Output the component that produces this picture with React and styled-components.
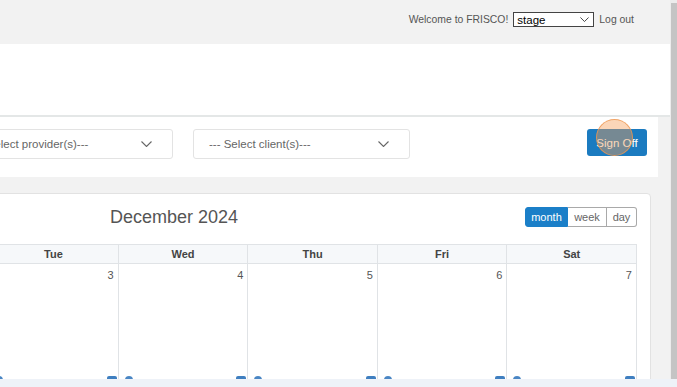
import React from "react";
import styled, { createGlobalStyle } from "styled-components";

const Global = createGlobalStyle`
  html, body { margin: 0; padding: 0; }
  body { font-family: "Liberation Sans", Arial, sans-serif; background: #fff; }
  * { box-sizing: border-box; }
`;

const Root = styled.div`
  width: 677px;
  height: 387px;
  overflow: hidden;
  display: flex;
  flex-direction: column;
`;

const Body = styled.div`
  flex: 1;
  min-height: 0;
  display: flex;
`;

const Main = styled.div`
  width: 670px;
  flex: none;
  overflow: hidden;
  background: #f2f2f2;
  display: flex;
  flex-direction: column;
`;

const Scrollbar = styled.div`
  flex: 1;
  background: #ececec;
  display: flex;
  justify-content: flex-end;
  padding-top: 3px;
`;

const Thumb = styled.div`
  width: 6px;
  height: 100%;
  background: #c4c4c4;
`;

const BottomBand = styled.div`
  height: 8px;
  flex: none;
  background: #eef2f8;
`;

const TopBar = styled.div`
  height: 44px;
  flex: none;
  display: flex;
  justify-content: flex-end;
  align-items: flex-start;
  gap: 4px;
  padding: 12px 36px 0 0;
  font-size: 10.4px;
  color: #555;
`;

const TopText = styled.span`
  line-height: 15px;
`;

const EnvSelect = styled.div`
  width: 81px;
  height: 15px;
  margin: 0 1px;
  border: 1px solid #444;
  background: #fff;
  display: flex;
  align-items: center;
  justify-content: space-between;
  padding: 0 4px 0 3px;
  font-size: 11.5px;
  color: #000;
`;

const Banner = styled.div`
  height: 73px;
  flex: none;
  background: #fff;
  border-bottom: 2px solid #e4e7e7;
`;

const Content = styled.div`
  margin-left: -300px;
  padding-right: 12px;
  display: flex;
  flex-direction: column;
`;

const FilterBar = styled.div`
  height: 60px;
  background: #fff;
  display: flex;
  align-items: flex-start;
  gap: 20px;
  padding: 12px 11px 0 256px;
`;

const Picker = styled.div`
  width: 217px;
  height: 30px;
  border: 1px solid #e3e3e3;
  border-radius: 3px;
  display: flex;
  align-items: center;
  justify-content: space-between;
  padding: 0 20px 0 15px;
  font-size: 11.5px;
  color: #666;
`;

const SignOffWrap = styled.div`
  margin-left: auto;
  position: relative;
`;

const SignOff = styled.button`
  width: 60px;
  height: 27px;
  border: none;
  border-radius: 3px;
  background: #1b7bc0;
  color: #fff;
  font-family: inherit;
  font-size: 11.5px;
  padding: 0;
`;

const ClickRing = styled.div`
  position: absolute;
  left: 9px;
  top: -10px;
  width: 37px;
  height: 37px;
  border-radius: 50%;
  background: rgba(246, 158, 86, 0.42);
  border: 1px solid rgba(238, 150, 80, 0.8);
  pointer-events: none;
`;

const Card = styled.div`
  margin: 16px 7px 0 15px;
  background: #fff;
  border: 1px solid #e2e2e2;
  border-radius: 4px;
  padding: 13px 13px 0 13px;
`;

const Toolbar = styled.div`
  height: 20px;
  display: flex;
  align-items: center;
  margin-bottom: 17px;
`;

const ToolLeft = styled.div`
  width: 94px;
  display: flex;
  gap: 4px;
`;

const Title = styled.h2`
  flex: 1;
  margin: 0;
  text-align: center;
  font-size: 18px;
  font-weight: normal;
  color: #555;
  line-height: 20px;
`;

const BtnGroup = styled.div`
  display: flex;
`;

const ViewBtn = styled.button`
  height: 20px;
  width: ${(p) => p.$w}px;
  padding: 0;
  font-family: inherit;
  font-size: 11px;
  color: ${(p) => (p.$active ? "#fff" : "#666")};
  background: ${(p) => (p.$active ? "#1b7fc8" : "#fff")};
  border: 1px solid ${(p) => (p.$active ? "#1b7fc8" : "#a9a9a9")};
  border-left-width: ${(p) => (p.$first ? 1 : 0)}px;
  border-radius: ${(p) => (p.$first ? "3px 0 0 3px" : p.$last ? "0 3px 3px 0" : "0")};
`;

const Grid = styled.div`
  display: grid;
  grid-template-columns: repeat(7, 1fr);
  border-left: 1px solid #e0e3e6;
`;

const HeadCell = styled.div`
  height: 20px;
  background: #f6f8fa;
  border-top: 1px solid #e0e3e6;
  border-bottom: 1px solid #e0e3e6;
  border-right: 1px solid #e0e3e6;
  font-size: 11px;
  font-weight: bold;
  color: #444;
  text-align: center;
  line-height: 18px;
`;

const DayCell = styled.div`
  height: 130px;
  border-right: 1px solid #e0e3e6;
  display: flex;
  flex-direction: column;
`;

const DayNum = styled.div`
  font-size: 11px;
  color: #555;
  text-align: right;
  padding: 5px 4px 0 0;
  flex: 1;
`;

const DayFoot = styled.div`
  height: 18px;
  display: flex;
  justify-content: space-between;
  align-items: flex-start;
  padding: 0 1px 0 6px;
`;

const Dot = styled.span`
  width: 8px;
  height: 8px;
  border-radius: 50%;
  background: #4a86c4;
`;

const Tag = styled.span`
  width: 10px;
  height: 8px;
  border-radius: 2px;
  background: #3f7fc0;
`;

const Chevron = ({ w = 11, h = 6, color = "#666" }) => (
  <svg width={w} height={h} viewBox="0 0 11 6" fill="none">
    <path d="M0.5 0.5 L5.5 5.5 L10.5 0.5" stroke={color} strokeWidth="1.1" />
  </svg>
);

const days = ["Sun", "Mon", "Tue", "Wed", "Thu", "Fri", "Sat"];

export default function App() {
  return (
    <>
      <Global />
      <Root>
        <Body>
          <Main>
            <TopBar>
              <TopText>Welcome to FRISCO!</TopText>
              <EnvSelect>
                <span>stage</span>
                <Chevron w={9} h={5} color="#333" />
              </EnvSelect>
              <TopText>Log out</TopText>
            </TopBar>
            <Banner />
            <Content>
              <FilterBar>
                <Picker>
                  <span>--- Select provider(s)---</span>
                  <Chevron />
                </Picker>
                <Picker>
                  <span>--- Select client(s)---</span>
                  <Chevron />
                </Picker>
                <SignOffWrap>
                  <SignOff>Sign Off</SignOff>
                  <ClickRing />
                </SignOffWrap>
              </FilterBar>
              <Card>
                <Toolbar>
                  <ToolLeft>
                    <BtnGroup>
                      <ViewBtn $w={24} $first>‹</ViewBtn>
                      <ViewBtn $w={24} $last>›</ViewBtn>
                    </BtnGroup>
                    <ViewBtn $w={40} $first $last>today</ViewBtn>
                  </ToolLeft>
                  <Title>December 2024</Title>
                  <BtnGroup>
                    <ViewBtn $w={43} $active $first>month</ViewBtn>
                    <ViewBtn $w={39}>week</ViewBtn>
                    <ViewBtn $w={30} $last>day</ViewBtn>
                  </BtnGroup>
                </Toolbar>
                <Grid>
                  {days.map((d) => (
                    <HeadCell key={d}>{d}</HeadCell>
                  ))}
                  {days.map((d, i) => (
                    <DayCell key={d}>
                      <DayNum>{i + 1}</DayNum>
                      <DayFoot>
                        <Dot />
                        <Tag />
                      </DayFoot>
                    </DayCell>
                  ))}
                </Grid>
              </Card>
            </Content>
          </Main>
          <Scrollbar>
            <Thumb />
          </Scrollbar>
        </Body>
        <BottomBand />
      </Root>
    </>
  );
}
